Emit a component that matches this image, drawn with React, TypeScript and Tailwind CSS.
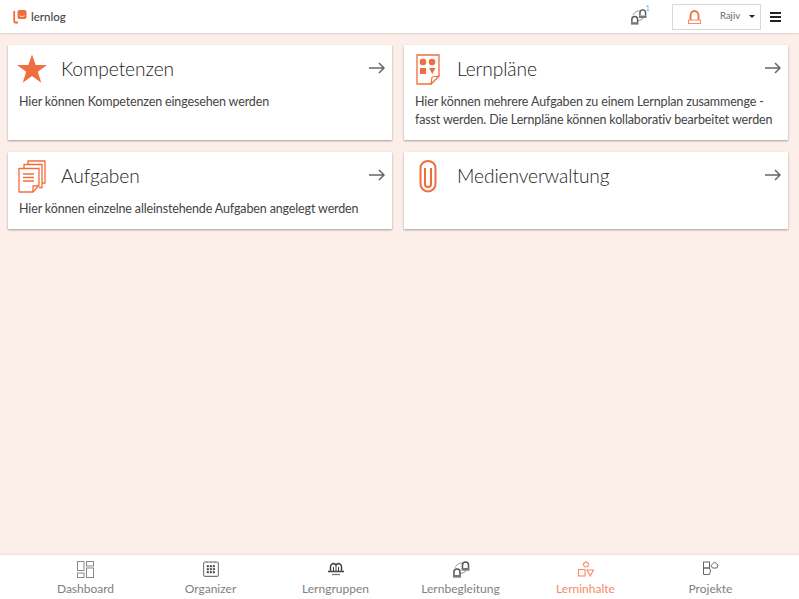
import React from "react";

const ORANGE = "#f26d3d";

function Person({ x, y, s = 1 }: { x: number; y: number; s?: number }) {
    return (
        <g transform={`translate(${x} ${y}) scale(${s})`}>
            <path d="M1 7V4a3 3 0 0 1 6 0v3" fill="none" stroke="#555" strokeWidth="1.500" />
            <rect x="0" y="7" width="8" height="2.600" fill="#777" />
        </g>
    );
}

function LogoIcon() {
    return (
        <svg width="14" height="14" viewBox="0 0 14 14" fill="none">
            <path d="M1.200 1v10.500a1 1 0 0 0 1 1H5" stroke={ORANGE} strokeWidth="1.800" />
            <rect x="4.500" y="0" width="9" height="9" rx="2" fill={ORANGE} />
            <path d="M6.500 5.800c1 .9 3 .9 5 0" stroke="#fff" strokeWidth=".8" />
        </svg>
    );
}

function ArrowIcon() {
    return (
        <svg width="16" height="12" viewBox="0 0 16 12" fill="none" stroke="#666" strokeWidth="1.500">
            <path d="M0 6h15M10 1l5 5-5 5" />
        </svg>
    );
}

function StarIcon() {
    return (
        <svg width="30" height="30" viewBox="0 0 30 30" className="-ml-[2px]">
            <path d="M15 .5l3.600 10.600H30l-9.200 6.700 3.500 11L15 22l-9.300 6.800 3.500-11L0 11.100h11.400z" fill={ORANGE} />
        </svg>
    );
}

function PlanIcon() {
    return (
        <svg width="24" height="31" viewBox="0 0 24 31" fill="none" className="ml-[1px]">
            <path d="M1 1h22v21l-8 8H1z" fill="#fff" stroke={ORANGE} strokeWidth="1.300" />
            <path d="M23 22c-3 .5-7 .5-7 1s-.5 4-1 7z" fill="#fff" stroke={ORANGE} strokeWidth="1.100" />
            <circle cx="7" cy="8" r="3.300" fill={ORANGE} />
            <circle cx="16" cy="8" r="3.300" fill={ORANGE} />
            <rect x="4" y="14" width="6" height="6" fill={ORANGE} />
            <path d="M13 14h6.500l-3.200 6z" fill={ORANGE} />
        </svg>
    );
}

function TasksIcon() {
    return (
        <svg width="28" height="33" viewBox="0 0 28 33" fill="none" stroke={ORANGE} strokeWidth="1.300" className="-ml-[1px]">
            <path d="M10 4V1h17v22h-3" />
            <path d="M6 8V4.500h18v23h-3" />
            <path d="M1 8.500h20v17l-6 6.500H1z" fill="#fff" />
            <path d="M21 25.500l-6 .5v6" />
            <path d="M5 14h11M5 17.500h11M5 21h11" strokeWidth="1.500" />
        </svg>
    );
}

function ClipIcon() {
    return (
        <svg width="18" height="33" viewBox="0 0 18 33" fill="none" stroke={ORANGE} strokeWidth="2" className="ml-[4px]">
            <path d="M1.500 8a7.500 7 0 0 1 15 0V24a7.500 7.500 0 0 1-15 0Z" />
            <path d="M6 8V24a3 3 0 0 0 6 0V8" />
        </svg>
    );
}

function GroupSwapIcon({ size = 18 }: { size?: number }) {
    return (
        <svg width={size} height={size} viewBox="0 0 18 18" fill="none">
            <path d="M3 7.500C5 4 8 3 10 3M15 9c-1 3-5 4.500-7 4.500" stroke="#888" strokeWidth="1" />
            <Person x={1} y={8} />
            <Person x={9.500} y={1} />
        </svg>
    );
}

function DashboardIcon() {
    return (
        <svg width="17" height="17" viewBox="0 0 17 17" fill="none" stroke="#888" strokeWidth="1">
            <rect x=".5" y=".5" width="6.500" height="9" />
            <rect x=".5" y="12" width="6.500" height="4.500" />
            <rect x="9.500" y=".5" width="7" height="4.500" />
            <rect x="9.500" y="7" width="7" height="9.500" />
        </svg>
    );
}

function OrganizerIcon() {
    return (
        <svg width="16" height="16" viewBox="0 0 16 16" fill="none">
            <rect x=".6" y="1" width="14.800" height="14.400" rx="1.500" stroke="#777" strokeWidth="1.100" />
            <path d="M4 .5v1.500M8 .5v1.500M12 .5v1.500" stroke="#777" />
            {[4.200, 7.200, 10.200].map((y) =>
                [3.800, 6.800, 9.800].map((x) => (
                    <rect key={`${x}-${y}`} x={x} y={y} width="2" height="2" fill="#444" />
                ))
            )}
        </svg>
    );
}

function GroupsIcon() {
    return (
        <svg width="16" height="14" viewBox="0 0 16 14" fill="none" stroke="#444">
            <path d="M2.500 9V4.500a3 3 0 0 1 5.500-1.500 3 3 0 0 1 5.500 1.500V9" strokeWidth="1.500" />
            <path d="M8 3v6M5.500 5v4M10.500 5v4" strokeWidth="1" />
            <path d="M0 9.500h16" strokeWidth="1.500" />
            <path d="M4 12.500h8" strokeWidth="1.300" stroke="#777" />
        </svg>
    );
}

function ContentIcon() {
    return (
        <svg width="16" height="16" viewBox="0 0 16 16" fill="none" stroke="#f58c67" strokeWidth="1.100">
            <path d="M8 .8l2.700 2-1 3H6.300l-1-3z" />
            <rect x=".5" y="8.500" width="6.500" height="6.500" />
            <path d="M9 9h6.500l-3.200 6z" />
        </svg>
    );
}

function ProjectIcon() {
    return (
        <svg width="16" height="16" viewBox="0 0 16 16" fill="none" stroke="#666" strokeWidth="1">
            <rect x=".5" y="1" width="6" height="6" />
            <path d="M.5 7h6l1 3-1 3.500h-6z" />
            <path d="M8 4.500l3.500-3.500 3.500 3-1 3h-4.500z" />
        </svg>
    );
}

function Card({ icon, title, children, className = "" }: { icon: React.ReactNode; title: string; children?: React.ReactNode; className?: string }) {
    return (
        <div className={`relative bg-white pl-[11px] pr-2 shadow-[0_1px_2px_rgba(0,0,0,0.35)] ${className}`}>
            <div className="absolute right-[7px] top-[17px]">
                <ArrowIcon />
            </div>
            <div className="flex h-[48px] items-center">
                <div className="flex w-[42px] shrink-0 justify-start">{icon}</div>
                <h2 className="text-[19.2px] font-light tracking-[-0.1px] text-[#222]">{title}</h2>
            </div>
            {children && <p className="whitespace-nowrap text-[12.5px] leading-[18px] tracking-[-0.14px] text-[#444]">{children}</p>}
        </div>
    );
}

const navItems = [
    { label: "Dashboard", icon: <DashboardIcon /> },
    { label: "Organizer", icon: <OrganizerIcon /> },
    { label: "Lerngruppen", icon: <GroupsIcon /> },
    { label: "Lernbegleitung", icon: <GroupSwapIcon /> },
    { label: "Lerninhalte", icon: <ContentIcon />, active: true },
    { label: "Projekte", icon: <ProjectIcon /> },
];

export default function App() {
    return (
        <div className="flex h-[599px] w-[799px] flex-col overflow-hidden bg-[#fceee9] font-['Lato','Open_Sans',sans-serif]">
            <header className="flex h-[33px] shrink-0 items-center bg-white pl-[13px] pr-[18px] shadow-[0_1px_2px_rgba(0,0,0,0.12)]">
                <LogoIcon />
                <span className="ml-[4px] text-[11.5px] font-medium text-[#444]">lernlog</span>
                <div className="relative ml-auto mr-[25px] -mt-[1px]">
                    <GroupSwapIcon size={17} />
                    <span className="absolute -right-[3px] -top-[4px] text-[8px] leading-none text-[#6db7e8]">1</span>
                </div>
                <div className="flex h-[26px] w-[89px] items-center border border-[#d9d9d9] pl-[15px] pr-[4px]">
                    <svg width="13" height="14" viewBox="0 0 13 14" fill="none">
                        <path d="M2.500 10V5.500a4 4.500 0 0 1 8 0V10" stroke={ORANGE} strokeWidth="1.800" />
                        <rect x=".5" y="10" width="12" height="3.500" stroke="#f58c67" />
                    </svg>
                    <span className="ml-[19px] text-[9.5px] text-[#666]">Rajiv</span>
                    <span className="ml-auto mr-[1px] h-0 w-0 border-x-[3.500px] border-t-[3.500px] border-x-transparent border-t-[#222]" />
                </div>
                <div className="ml-[9px] flex w-[11px] flex-col gap-[2px]">
                    <span className="h-[2px] bg-[#222]" />
                    <span className="h-[2px] bg-[#222]" />
                    <span className="h-[2px] bg-[#222]" />
                </div>
            </header>

            <main className="grid flex-1 grid-cols-[384px_384px] content-start gap-x-3 gap-y-3 pl-2 pt-3">
                <Card icon={<StarIcon />} title="Kompetenzen" className="h-[95px]">
                    Hier können Kompetenzen eingesehen werden
                </Card>
                <Card icon={<PlanIcon />} title="Lernpläne" className="h-[95px]">
                    Hier können mehrere Aufgaben zu einem Lernplan zusammenge -
                    <br />
                    fasst werden. Die Lernpläne können kollaborativ bearbeitet werden
                </Card>
                <Card icon={<TasksIcon />} title="Aufgaben" className="h-[77px]">
                    Hier können einzelne alleinstehende Aufgaben angelegt werden
                </Card>
                <Card icon={<ClipIcon />} title="Medienverwaltung" className="h-[77px]" />
            </main>

            <nav className="grid h-[44px] shrink-0 grid-cols-6 bg-white pl-[23px] pr-[26px] shadow-[0_-1px_2px_rgba(0,0,0,0.08)]">
                {navItems.map((item) => (
                    <div key={item.label} className="flex flex-col items-center">
                        <div className="flex h-[27px] items-center pt-[1px]">{item.icon}</div>
                        <span className={`text-[12px] leading-[13px] ${item.active ? "text-[#f58c67]" : "text-[#808080]"}`}>{item.label}</span>
                    </div>
                ))}
            </nav>
        </div>
    );
}
